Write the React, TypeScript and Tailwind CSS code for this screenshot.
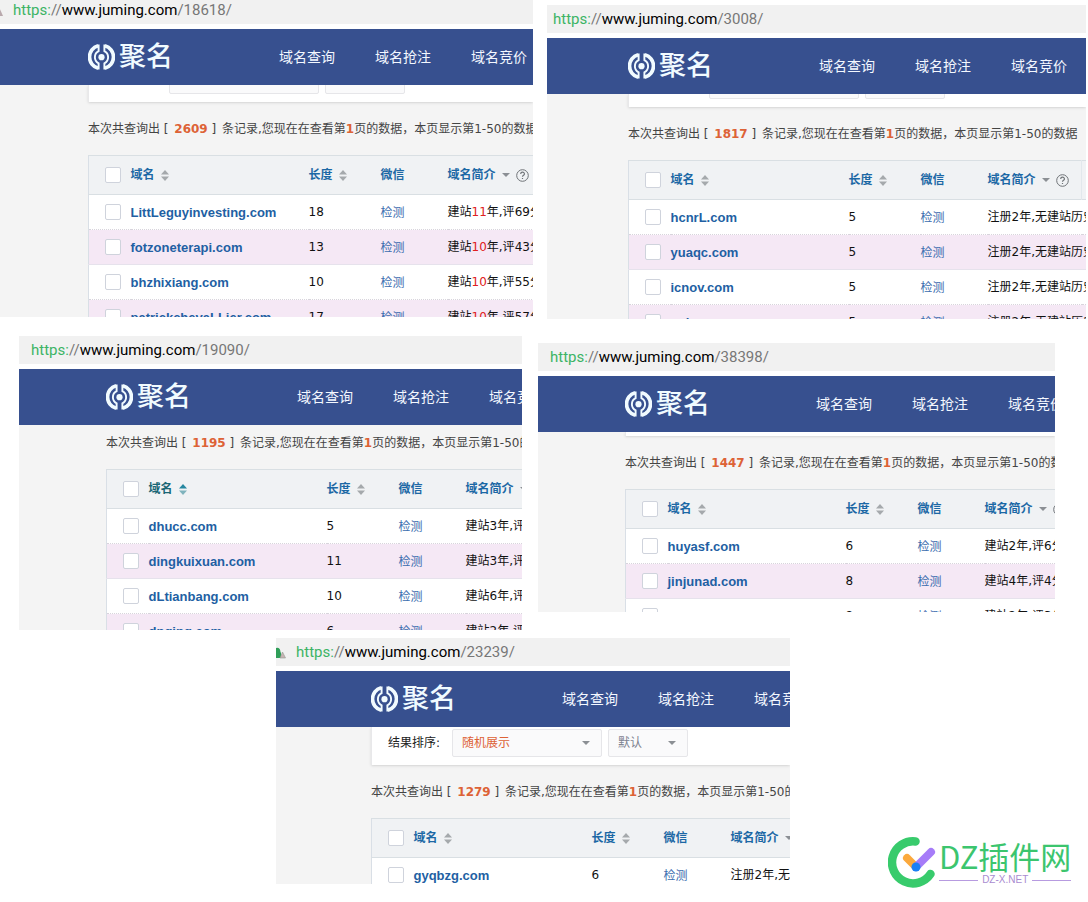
import type { ReactNode } from 'react';

type Row = { domain: string; length: number; intro: ReactNode };

type Shot = {
  id: string;
  total: number;
  rows: Row[];
  className: string;
  indent: string;
  barClass: string;
  bodyHeight: string;
  summaryHeight?: string;
  filterHeight?: string;
  filterLabel?: boolean;
  filterEmpty?: boolean;
  sort?: string;
  sorted?: boolean;
  badge?: ReactNode;
};

const years = (n: number, score: number) => (
  <>
    建站{n > 9 ? <span className="text-[#e02020]">{n}</span> : n}年,评{score}分
  </>
);

const noHistory = '注册2年,无建站历史';

const warning = (
  <svg width="10" height="12" viewBox="0 0 10 12" aria-hidden="true">
    <path d="M-4 11 L-1 2 L3 11 Z" fill="#b9a9ad" />
  </svg>
);

const lock = (
  <svg width="10" height="12" viewBox="0 0 10 12" aria-hidden="true">
    <path d="M0 1 Q4 0 4.500 5 L5 6 V11 H0 Z" fill="#2f9e58" />
    <path d="M6.500 5 L9.500 11 H4 Z" fill="#c9b3b3" stroke="#8d9a92" strokeWidth="0.600" />
  </svg>
);

const shots: Record<string, Shot> = {
  a: {
    id: '18618',
    total: 2609,
    className: '',
    indent: 'pl-[88px]',
    barClass: 'h-6 pb-1 pl-[13px]',
    bodyHeight: 'h-[232px]',
    filterHeight: 'h-[17px]',
    sort: '站龄从大到小',
    badge: warning,
    rows: [
      { domain: 'LittLeguyinvesting.com', length: 18, intro: years(11, 69) },
      { domain: 'fotzoneterapi.com', length: 13, intro: years(10, 43) },
      { domain: 'bhzhixiang.com', length: 10, intro: years(10, 55) },
      { domain: 'patrickchevaLLier.com', length: 17, intro: years(10, 57) },
    ],
  },
  b: {
    id: '3008',
    total: 1817,
    className: 'mt-[5px]',
    indent: 'pl-[81px]',
    barClass: 'h-7 pl-1.5',
    bodyHeight: 'h-[225px]',
    filterHeight: 'h-[13px]',
    rows: [
      { domain: 'hcnrL.com', length: 5, intro: noHistory },
      { domain: 'yuaqc.com', length: 5, intro: noHistory },
      { domain: 'icnov.com', length: 5, intro: noHistory },
      { domain: 'suhoe.com', length: 5, intro: noHistory },
    ],
  },
  c: {
    id: '19090',
    total: 1195,
    className: '',
    indent: 'pl-[87px]',
    barClass: 'h-7 pl-3',
    bodyHeight: 'h-[205px]',
    summaryHeight: 'h-11 pb-2',
    sorted: true,
    rows: [
      { domain: 'dhucc.com', length: 5, intro: years(3, 45) },
      { domain: 'dingkuixuan.com', length: 11, intro: years(3, 45) },
      { domain: 'dLtianbang.com', length: 10, intro: years(6, 45) },
      { domain: 'dnqing.com', length: 6, intro: years(2, 45) },
    ],
  },
  d: {
    id: '38398',
    total: 1447,
    className: 'mt-[7px]',
    indent: 'pl-[87px]',
    barClass: 'h-7 pl-3',
    bodyHeight: 'h-[180px]',
    filterHeight: 'h-1',
    filterEmpty: true,
    rows: [
      { domain: 'huyasf.com', length: 6, intro: years(2, 6) },
      { domain: 'jinjunad.com', length: 8, intro: years(4, 4) },
      { domain: 'hzhanwen.com', length: 8, intro: years(2, 3) },
    ],
  },
  e: {
    id: '23239',
    total: 1279,
    className: '',
    indent: 'pl-[95px]',
    barClass: 'h-7 pl-5',
    bodyHeight: 'h-[157px]',
    filterHeight: 'h-[38px]',
    filterLabel: true,
    badge: lock,
    rows: [{ domain: 'gyqbzg.com', length: 6, intro: noHistory }],
  },
};

function JumingLogo() {
  return (
    <a href="#" className="flex w-[85px] shrink-0 items-center gap-1 text-[#f1fbff]">
      <svg width="28" height="28" viewBox="0 0 28 28" fill="none" stroke="currentColor" aria-hidden="true">
        <path d="M10.500 2.400 A12 12 0 0 0 10.500 25.600" strokeWidth="3.800" />
        <path d="M17.500 2.400 A12 12 0 0 1 17.500 25.600" strokeWidth="3.800" />
        <path d="M11 1 V8 A7 7 0 0 0 11 20.500 V27" strokeWidth="2" />
        <path d="M17 1 V8 A7 7 0 0 1 17 20.500 V27" strokeWidth="2" />
        <circle cx="14" cy="14.200" r="3.200" fill="currentColor" stroke="none" />
      </svg>
      <span className="text-[27px] leading-8 font-medium">聚名</span>
    </a>
  );
}

function SortArrows({ active }: { active?: boolean }) {
  return (
    <svg width="8" height="11" viewBox="0 0 8 11" aria-hidden="true">
      <path d="M4 0 L8 4.500 H0 Z" fill={active ? '#2687a0' : '#a5a9ac'} />
      <path d="M4 11 L0 6.500 H8 Z" fill={active ? '#7fb3bd' : '#a5a9ac'} />
    </svg>
  );
}

function Caret() {
  return (
    <svg width="8" height="4" viewBox="0 0 8 4" aria-hidden="true">
      <path d="M0 0 H8 L4 4 Z" fill="#8b8f94" />
    </svg>
  );
}

function Picker({ label, value, className }: { label: string; value: string; className: string }) {
  return (
    <span className={`relative flex h-7 shrink-0 items-center rounded-xs border border-[#e6e6e9] bg-[#fafafb] ${className}`}>
      <select aria-label={label} className="h-full w-full appearance-none bg-transparent px-[9px] outline-none">
        <option>{value}</option>
      </select>
      <span className="pointer-events-none absolute right-[11px]">
        <Caret />
      </span>
    </span>
  );
}

function Tick({ label }: { label: string }) {
  return (
    <input
      type="checkbox"
      aria-label={label}
      className="ml-4 block size-4 appearance-none rounded-xs border border-[#cfd3dc] bg-white"
    />
  );
}

function DomainTable({ rows, sorted }: { rows: Row[]; sorted?: boolean }) {
  return (
    <table className="w-[720px] table-fixed border-collapse border-l border-[#d9dfe6] text-left text-xs whitespace-nowrap">
      <colgroup>
        <col className="w-[42px]" />
        <col className="w-[178px]" />
        <col className="w-[72px]" />
        <col className="w-[67px]" />
        <col className="w-[94px]" />
        <col />
      </colgroup>
      <thead>
        <tr className="h-[39px] border-y border-[#d9dfe3] bg-[#f0f2f4] text-[#1c68a5]">
          <th className="p-0"><Tick label="全选" /></th>
          <th className="p-0">
            <button className={`flex items-center gap-1.5 font-bold ${sorted ? 'text-[#1a6675]' : ''}`}>
              域名 <SortArrows active={sorted} />
            </button>
          </th>
          <th className="p-0">
            <button className="flex items-center gap-1.5 font-bold">
              长度 <SortArrows />
            </button>
          </th>
          <th className="p-0">微信</th>
          <th className="p-0">
            <span className="flex items-center gap-1.5">
              <button className="flex items-center gap-1.5 font-bold">
                域名简介 <Caret />
              </button>
              <svg width="13" height="13" viewBox="0 0 13 13" fill="none" stroke="#6f7377" aria-hidden="true">
                <circle cx="6.500" cy="6.500" r="5.800" />
                <path d="M4.700 5 C4.700 2.600 8.400 2.600 8.400 4.900 C8.400 6.300 6.500 6.200 6.500 7.800 M6.500 8.900 V10" strokeWidth="1.200" />
              </svg>
            </span>
          </th>
          <th className="border-l border-[#e2e8ec] p-0" />
        </tr>
      </thead>
      <tbody>
        {rows.map((row) => (
          <tr
            key={row.domain}
            className="h-[35px] border-b border-dotted border-[#d8d4dc] bg-white text-[#111111] even:border-solid even:border-[#e6e2ec] even:bg-[#f5e8f5]"
          >
            <td className="p-0"><Tick label={row.domain} /></td>
            <td className="p-0 pt-0.5">
              <a href="#" className="font-['Liberation_Sans',sans-serif] text-[13px] font-bold text-[#225fa3]">{row.domain}</a>
            </td>
            <td className="p-0">{row.length}</td>
            <td className="p-0 pt-0.5"><a href="#" className="text-[#3b6cae]">检测</a></td>
            <td colSpan={2} className="p-0">{row.intro}</td>
          </tr>
        ))}
      </tbody>
    </table>
  );
}

function SitePage({ shot }: { shot: Shot }) {
  return (
    <section className={`min-w-0 overflow-hidden ${shot.className}`}>
      {/* Address bar */}
      <div
        className={`relative mb-[5px] flex items-center bg-[#f1f1f1] font-[Roboto,'Open_Sans',sans-serif] text-[15px] whitespace-nowrap text-[#777777] ${shot.barClass}`}
      >
        {shot.badge && <span className="absolute bottom-[7px] left-0">{shot.badge}</span>}
        <span className="text-[#3cb465]">https:</span>
        <span>//</span>
        <span className="text-black">www.juming.com</span>
        <span>/{shot.id}/</span>
      </div>

      {/* Site header */}
      <header className={`flex h-14 items-center bg-[#37508f] whitespace-nowrap ${shot.indent}`}>
        <JumingLogo />
        <nav className="ml-[106px] flex shrink-0 gap-10 text-sm text-[#f4f8ff]">
          <a href="#">域名查询</a>
          <a href="#">域名抢注</a>
          <a href="#">域名竞价</a>
        </nav>
      </header>

      {/* Results */}
      <div className={`overflow-hidden bg-[#f4f4f4] ${shot.indent} ${shot.bodyHeight}`}>
        {shot.filterHeight && (
          <div className={`flex flex-col justify-end overflow-hidden border-l border-[#e8e8ea] bg-white shadow-sm ${shot.filterHeight}`}>
            {!shot.filterEmpty && (
              <div className="flex shrink-0 items-center pb-2 pl-4 text-xs whitespace-nowrap text-[#222222]">
                <span className="w-16 shrink-0">{shot.filterLabel && '结果排序:'}</span>
                <Picker label="结果排序" value={shot.sort ?? '随机展示'} className="w-[150px] text-[#dd6236]" />
                <Picker label="方式" value="默认" className="ml-1.5 w-20 text-[#7e8290]" />
              </div>
            )}
          </div>
        )}
        <p className={`flex items-center text-xs whitespace-pre text-[#444444] ${shot.summaryHeight ?? 'h-[53px]'}`}>
          本次共查询出 [ <b className="pl-0.5 text-[#dd6236]">{shot.total}</b> ] <span className="pl-0.5">条记录,您现在在查看第</span>
          <b className="text-[#dd6236]">1</b>页的数据，本页显示第1-50的数据
        </p>
        <DomainTable rows={shot.rows} sorted={shot.sorted} />
      </div>
    </section>
  );
}

function Watermark() {
  return (
    <div className="mt-[198px] flex h-[52px] items-center">
      <svg width="51" height="52" viewBox="0 0 51 52" fill="none" strokeLinecap="round" aria-hidden="true">
        <path d="M27.500 5.500 A21 21 0 1 0 42.500 38" stroke="#38cb6c" strokeWidth="8.500" />
        <path d="M19 22 L28 31" stroke="#fba93c" strokeWidth="8" />
        <path d="M43 16 L28 31" stroke="#a67cf8" strokeWidth="8" />
        <circle cx="28" cy="31" r="4.500" fill="#1a80f5" />
      </svg>
      <div className="shrink-0">
        <p className="font-['Noto_Sans_CJK_SC',sans-serif] text-[31px] leading-9 whitespace-nowrap text-[#3cc56e]">DZ插件网</p>
        <div className="flex items-center gap-1 text-[10px] leading-3 text-[#a98bd0]">
          <span className="h-px flex-1 bg-[#b79be0]" />
          <span className="font-['Liberation_Sans',sans-serif]">DZ-X.NET</span>
          <span className="h-px flex-1 bg-[#b79be0]" />
        </div>
      </div>
    </div>
  );
}

export default function App() {
  return (
    <main className="min-h-screen overflow-hidden bg-white font-['DejaVu_Sans','Noto_Sans_CJK_SC',sans-serif]">
      <div className="grid grid-cols-[533fr_539fr] items-start gap-x-3.5 pr-0.5">
        <SitePage shot={shots.a} />
        <SitePage shot={shots.b} />
      </div>
      <div className="mt-[17px] grid grid-cols-[503fr_517fr] items-start gap-x-4 pr-[33px] pl-[19px]">
        <SitePage shot={shots.c} />
        <SitePage shot={shots.d} />
      </div>
      <div className="mt-2 grid grid-cols-[514fr_200fr] items-start gap-x-[98px] pl-[276px]">
        <SitePage shot={shots.e} />
        <Watermark />
      </div>
    </main>
  );
}
